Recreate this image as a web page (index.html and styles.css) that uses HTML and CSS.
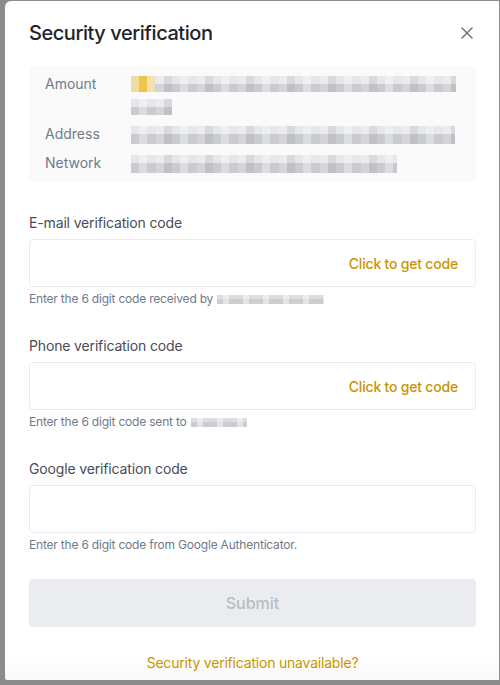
FILE: index.html
```html
<!DOCTYPE html>
<html lang="en">
<head>
<meta charset="utf-8">
<title>Security verification</title>
<link rel="stylesheet" href="styles.css">
</head>
<body>
<div class="backdrop">
  <div class="modal">
    <div class="header">
      <h1 class="title">Security verification</h1>
      <button class="close" aria-label="Close">
        <svg width="12" height="12" viewBox="0 0 12 12"><path d="M1 1L11 11M11 1L1 11" stroke="#707a8a" stroke-width="1.6" stroke-linecap="round"/></svg>
      </button>
    </div>

    <div class="info">
      <div class="info-row">
        <div class="info-label">Amount</div>
        <div class="info-value">
          <div class="blur blur-amount"><span class="blur-gold"></span></div>
          <div class="blur blur-short"></div>
        </div>
      </div>
      <div class="info-row">
        <div class="info-label">Address</div>
        <div class="info-value"><div class="blur blur-address"></div></div>
      </div>
      <div class="info-row">
        <div class="info-label">Network</div>
        <div class="info-value"><div class="blur blur-network"></div></div>
      </div>
    </div>

    <div class="field">
      <div class="field-label">E-mail verification code</div>
      <div class="input"><span class="get-code">Click to get code</span></div>
      <div class="helper">Enter the 6 digit code received by <span class="blur-inline blur-email"></span></div>
    </div>

    <div class="field">
      <div class="field-label">Phone verification code</div>
      <div class="input"><span class="get-code">Click to get code</span></div>
      <div class="helper">Enter the 6 digit code sent to <span class="blur-inline blur-phone"></span></div>
    </div>

    <div class="field">
      <div class="field-label">Google verification code</div>
      <div class="input"></div>
      <div class="helper">Enter the 6 digit code from Google Authenticator.</div>
    </div>

    <button class="submit">Submit</button>

    <div class="unavailable">Security verification unavailable?</div>
  </div>
</div>
</body>
</html>
```

FILE: styles.css
```css
* { box-sizing: border-box; }

html, body {
  margin: 0;
  padding: 0;
  height: 100%;
  overflow: hidden;
}

body {
  background: #8c8c8c;
  font-family: Inter, "Noto Sans", sans-serif;
}

.backdrop {
  padding: 1px 1px 0 5px;
  height: 685px;
}

.modal {
  background: #ffffff;
  width: 494px;
  height: 679px;
  border-top-left-radius: 6px;
  border-bottom-left-radius: 2px;
  padding: 0 23px 0 24px;
  display: flex;
  flex-direction: column;
  background-image: linear-gradient(to bottom, rgba(255,255,255,0) 655px, #f8f8f8 679px);
}

.header {
  display: flex;
  align-items: center;
  justify-content: space-between;
  padding-top: 18px;
}

.title {
  margin: 0;
  font-size: 20px;
  line-height: 28px;
  font-weight: 500;
  color: #1e2329;
  letter-spacing: -0.45px;
}

.close {
  border: 0;
  background: none;
  padding: 0;
  margin-right: 3px;
  width: 12px;
  height: 12px;
  display: flex;
}

.info {
  margin-top: 19px;
  background: #fafafa;
  border-radius: 4px;
  padding: 8px 20px 8px 16px;
  display: flex;
  flex-direction: column;
  gap: 9px;
}

.info-row {
  display: flex;
}

.info-label {
  width: 86px;
  flex: none;
  font-size: 14px;
  line-height: 20px;
  color: #707a8a;
}

.info-value {
  flex: 1;
  display: flex;
  flex-direction: column;
  gap: 4px;
  padding-top: 2px;
}

.blur {
  height: 16px;
  position: relative;
  background:
    repeating-linear-gradient(to right, rgba(255,255,255,0) 0 8px, rgba(255,255,255,0.35) 8px 16px, rgba(255,255,255,0) 16px 25px, rgba(255,255,255,0.2) 25px 33px, rgba(120,120,130,0.12) 33px 41px),
    linear-gradient(to bottom, #e6e7ea 0 8px, #c9cbd0 8px 16px);
}

.blur-amount { width: 325px; }
.blur-short { width: 41px; height: 16px; margin-top: 3px; }
.blur-address { width: 324px; height: 18px; }
.blur-network { width: 266px; height: 18px; }

.blur-gold {
  position: absolute;
  left: 0;
  top: 0;
  width: 24px;
  height: 16px;
  background: linear-gradient(to right, #f3dc9a 0 8px, #eec54a 8px 16px, #f2e2b3 16px 24px);
}

.field {
  margin-top: 32px;
  display: flex;
  flex-direction: column;
}

.field + .field { margin-top: 29px; }

.field-label {
  font-size: 14px;
  line-height: 20px;
  color: #474d57;
  margin-bottom: 6px;
  letter-spacing: -0.15px;
}

.input {
  height: 48px;
  border: 1px solid #eaecef;
  border-radius: 4px;
  display: flex;
  align-items: center;
  justify-content: flex-end;
  padding-right: 17px;
}

.get-code {
  font-size: 14px;
  font-weight: 500;
  color: #c99400;
  letter-spacing: -0.2px;
}

.helper {
  margin-top: 4px;
  font-size: 12px;
  line-height: 16px;
  color: #707a8a;
  display: flex;
  align-items: center;
  letter-spacing: -0.2px;
}

.blur-inline {
  display: inline-block;
  height: 9px;
  margin-left: 4px;
  background:
    repeating-linear-gradient(to right, rgba(255,255,255,0) 0 6px, rgba(255,255,255,0.45) 6px 12px, rgba(255,255,255,0) 12px 20px),
    linear-gradient(to bottom, #dcdde0 0 4px, #cbcdd1 4px 9px);
}

.blur-email { width: 107px; }
.blur-phone { width: 56px; }

.submit {
  margin-top: 26px;
  height: 48px;
  border: 0;
  border-radius: 4px;
  background: #eaecef;
  color: #b7bdc6;
  font-family: inherit;
  font-size: 16px;
  font-weight: 500;
}

.unavailable {
  margin-top: 26px;
  text-align: center;
  font-size: 14px;
  line-height: 20px;
  color: #c99400;
  letter-spacing: -0.2px;
}
```
